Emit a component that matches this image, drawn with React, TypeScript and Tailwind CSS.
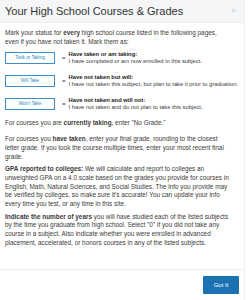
import React from 'react'

const statuses = [
  {
    label: 'Took or Taking',
    title: 'Have taken or am taking:',
    text: 'I have completed or am now enrolled in this subject.',
  },
  {
    label: 'Will Take',
    title: 'Have not taken but will:',
    text: 'I have not taken this subject, but plan to take it prior to graduation.',
  },
  {
    label: "Won't Take",
    title: 'Have not taken and will not:',
    text: 'I have not taken and do not plan to take this subject.',
  },
]

const Line = ({ children }: { children: React.ReactNode }) => (
  <span className="block whitespace-nowrap">{children}</span>
)

export default function App() {
  return (
    <div className="w-[250px] h-[300px] bg-white overflow-hidden font-['Liberation_Sans',Arial,sans-serif] text-[#3a3a3a]">
      <div className="w-[245px] h-full border-r border-[#eef0f2] flex flex-col">
        {/* Header */}
        <div className="h-[23px] shrink-0 bg-[#f4f6f8] flex items-center justify-between pl-[5px] pr-[8px] border-b border-[#eceef0]">
          <h1 className="text-[11px] leading-none font-normal text-[#333] pt-[1px]">Your High School Courses &amp; Grades</h1>
          <span className="text-[8px] leading-none text-[#c4c8cc]">×</span>
        </div>

        {/* Body */}
        <div className="px-[5px] pt-[6px] text-[6.4px] leading-[8.7px] flex-1">
          <p>
            <Line>Mark your status for <b>every</b> high school course listed in the following pages,</Line>
            <Line>even if you have not taken it. Mark them as:</Line>
          </p>

          <div className="mt-[5px] flex flex-col gap-[9px]">
            {statuses.map((s) => (
              <div key={s.label} className="flex items-center">
                <div className="w-[50px] h-[12px] border border-[#3d8ccc] flex items-center justify-center text-[#2f7fc0] text-[4.6px] shrink-0">
                  {s.label}
                </div>
                <span className="ml-[7px] mr-[3px] text-[6px] font-bold">=</span>
                <div className="leading-[7px]">
                  <div className="font-bold text-[#222] text-[5.8px]">{s.title}</div>
                  <div className="text-[5.8px] whitespace-nowrap">{s.text}</div>
                </div>
              </div>
            ))}
          </div>

          <p className="mt-[8px]">
            For courses you are <b>currently taking</b>, enter "No Grade."
          </p>
          <p className="mt-[7px]">
            <Line>For courses you <b>have taken</b>, enter your final grade, rounding to the closest</Line>
            <Line>letter grade. If you took the course multiple times, enter your most recent final</Line>
            <Line>grade.</Line>
          </p>
          <p className="mt-[4px]">
            <Line><b>GPA reported to colleges:</b> We will calculate and report to colleges an</Line>
            <Line>unweighted GPA on a 4.0 scale based on the grades you provide for courses in</Line>
            <Line>English, Math, Natural Sciences, and Social Studies. The info you provide may</Line>
            <Line>be verified by colleges, so make sure it's accurate! You can update your info</Line>
            <Line>every time you test, or any time in this site.</Line>
          </p>
          <p className="mt-[4px]">
            <Line><b>Indicate the number of years</b> you will have studied each of the listed subjects</Line>
            <Line>by the time you graduate from high school. Select "0" if you did not take any</Line>
            <Line>course in a subject. Also indicate whether you were enrolled in advanced</Line>
            <Line>placement, accelerated, or honors courses in any of the listed subjects.</Line>
          </p>
        </div>

        {/* Footer */}
        <div className="border-t border-[#eceef0] h-[31px] shrink-0 flex items-center justify-end pr-[5px]">
          <button className="w-[36px] h-[18px] bg-[#1a72b3] text-white text-[6px] rounded-[1px]">
            Got It
          </button>
        </div>
      </div>
    </div>
  )
}
